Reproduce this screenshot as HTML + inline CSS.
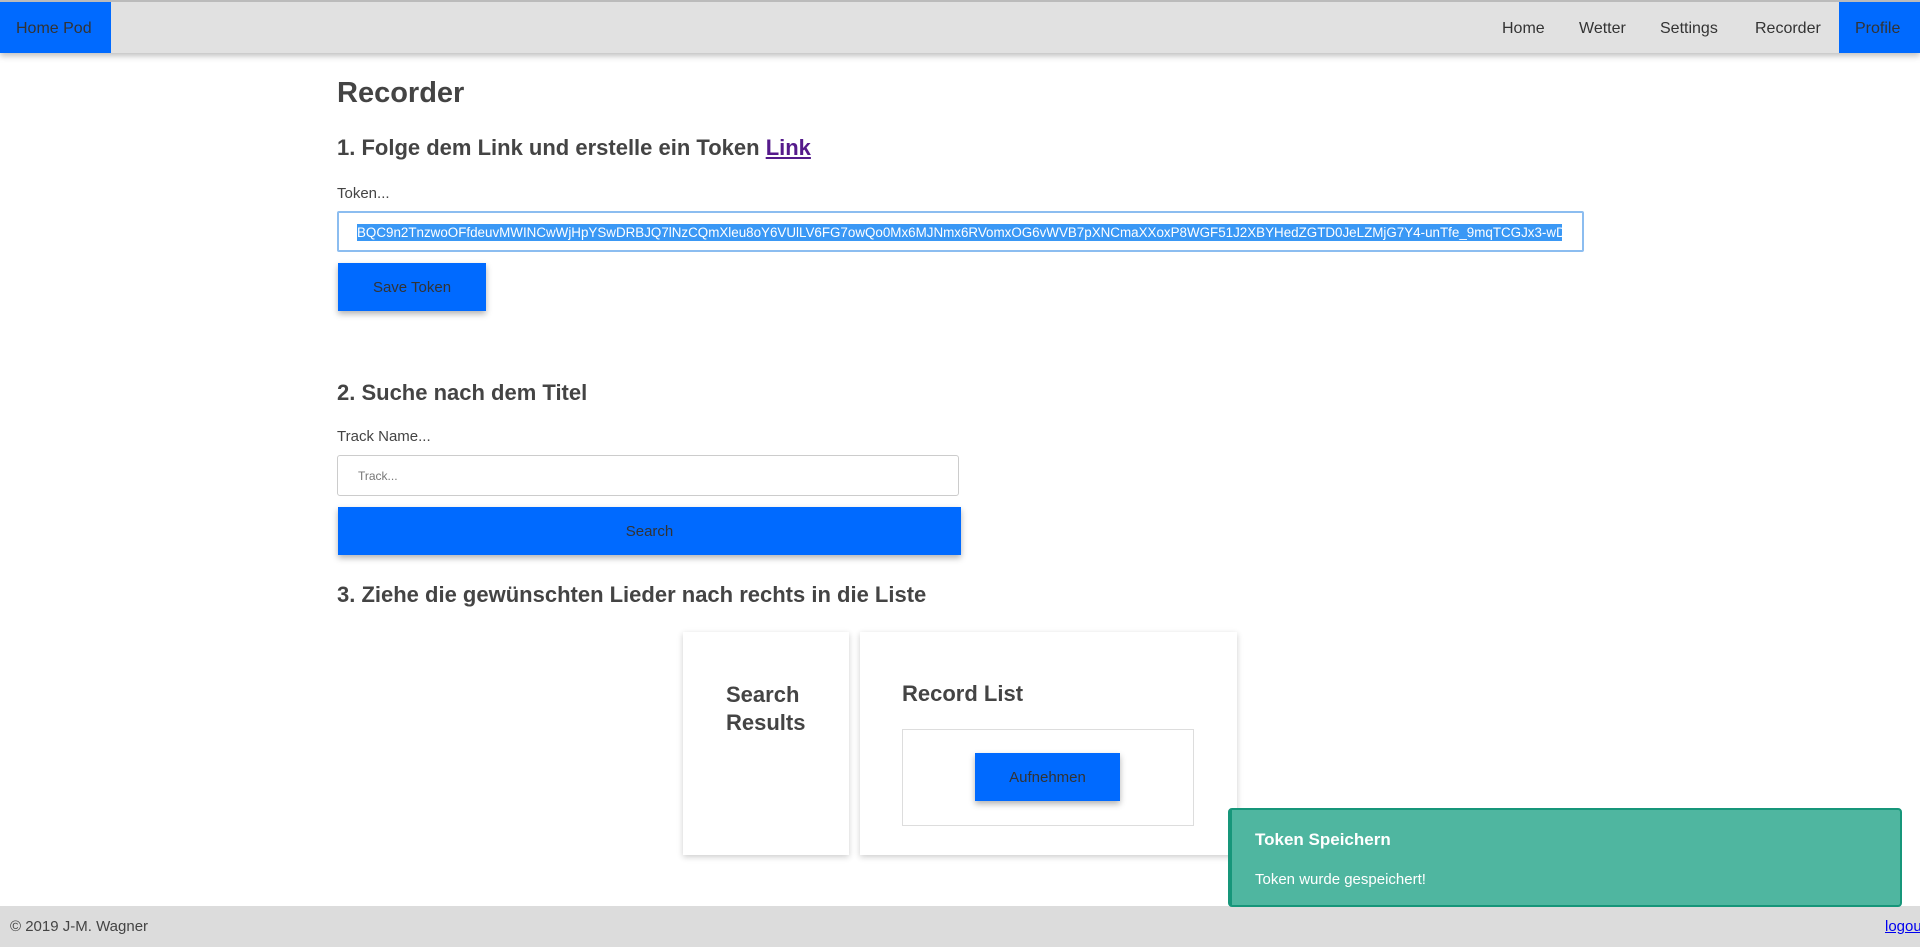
<!DOCTYPE html>
<html><head><meta charset="utf-8"><style>
*{box-sizing:border-box;margin:0;padding:0}
body{width:1920px;height:947px;position:relative;overflow:hidden;background:#fff;font-family:"Liberation Sans",sans-serif;color:#444}
.a{position:absolute}
.nav{left:0;top:0;width:1920px;height:53px;background:#e1e1e1;border-top:2px solid #bbb;box-shadow:0 3px 6px rgba(0,0,0,.25)}
.nav span{position:absolute;top:18px;font-size:16px;color:#333}
.blue{background:#006aff}
h1{font-size:29px;font-weight:bold}
h2{font-size:22px;font-weight:bold}
.lbl{font-size:15px;color:#444}
.btn{background:#006aff;box-shadow:0 3px 6px rgba(0,0,0,.3);font-size:15px;color:#333;display:flex;align-items:center;justify-content:center}
.card{background:#fff;box-shadow:0 2px 6px rgba(0,0,0,.2)}
</style></head><body>
<div class="a nav">
<div class="a blue" style="left:0;top:0;width:111px;height:51px"></div>
<span style="left:16px">Home Pod</span>
<span style="left:1502px">Home</span>
<span style="left:1579px">Wetter</span>
<span style="left:1660px">Settings</span>
<span style="left:1755px">Recorder</span>
<div class="a blue" style="left:1839px;top:0;width:81px;height:51px"></div>
<span style="left:1855px">Profile</span>
</div>
<h1 class="a" style="left:337px;top:77px">Recorder</h1>
<h2 class="a" style="left:337px;top:135px">1. Folge dem Link und erstelle ein Token <a style="color:#551a8b;text-decoration:underline">Link</a></h2>
<div class="a lbl" style="left:337px;top:185px">Token...</div>
<div class="a" style="left:337px;top:211px;width:1247px;height:41px;border:2px solid #8cbdf0;border-radius:2px;overflow:hidden">
<div class="a" style="left:18px;top:11px;width:1205px;height:17px;background:#3a98f5;color:#fff;font-size:13.4px;line-height:17px;white-space:nowrap;overflow:hidden">BQC9n2TnzwoOFfdeuvMWINCwWjHpYSwDRBJQ7lNzCQmXleu8oY6VUlLV6FG7owQo0Mx6MJNmx6RVomxOG6vWVB7pXNCmaXXoxP8WGF51J2XBYHedZGTD0JeLZMjG7Y4-unTfe_9mqTCGJx3-wDc</div>
</div>
<div class="a btn" style="left:338px;top:263px;width:148px;height:48px">Save Token</div>
<h2 class="a" style="left:337px;top:380px">2. Suche nach dem Titel</h2>
<div class="a lbl" style="left:337px;top:428px">Track Name...</div>
<div class="a" style="left:337px;top:455px;width:622px;height:41px;border:1px solid #ccc;border-radius:3px;font-size:12px;color:#777;padding:13px 0 0 20px">Track...</div>
<div class="a btn" style="left:338px;top:507px;width:623px;height:48px">Search</div>
<h2 class="a" style="left:337px;top:582px">3. Ziehe die gewünschten Lieder nach rechts in die Liste</h2>
<div class="a card" style="left:683px;top:632px;width:166px;height:223px"></div>
<div class="a" style="left:726px;top:681px;font-size:22px;font-weight:bold;line-height:28px">Search<br>Results</div>
<div class="a card" style="left:860px;top:632px;width:377px;height:223px"></div>
<div class="a" style="left:902px;top:681px;font-size:22px;font-weight:bold">Record List</div>
<div class="a" style="left:902px;top:729px;width:292px;height:97px;border:1px solid #ddd"></div>
<div class="a btn" style="left:975px;top:753px;width:145px;height:48px">Aufnehmen</div>
<div class="a" style="left:0;top:906px;width:1920px;height:41px;background:#dcdcdc"></div>
<div class="a" style="left:10px;top:918px;font-size:15px;color:#444">© 2019 J-M. Wagner</div>
<div class="a" style="left:1885px;top:918px;font-size:15px;color:#00e;text-decoration:underline">logout</div>
<div class="a" style="left:1228px;top:808px;width:674px;height:99px;background:#4fb6a0;border:2px solid #16967a;border-left-width:4px;border-radius:4px;color:#fff">
<div class="a" style="left:23px;top:20px;font-size:17px;font-weight:bold">Token Speichern</div>
<div class="a" style="left:23px;top:61px;font-size:15px">Token wurde gespeichert!</div>
</div>
</body></html>
